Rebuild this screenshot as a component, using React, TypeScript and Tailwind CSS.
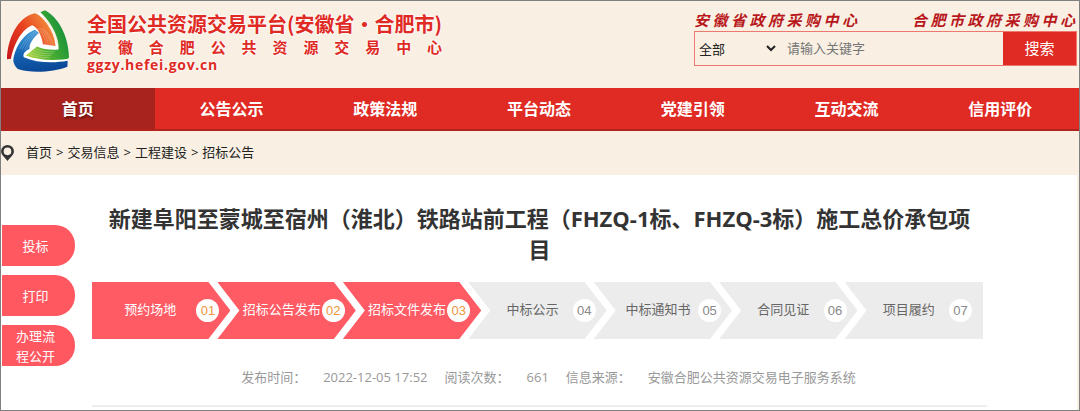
import { useState } from 'react'
import clsx from 'clsx'

interface Step {
  name: string
  no: string
  done: boolean
}

const navItems = ['首页', '公告公示', '政策法规', '平台动态', '党建引领', '互动交流', '信用评价']

const crumbs = ['首页', '交易信息', '工程建设', '招标公告']

const sideButtons = ['投标', '打印', '办理流程公开']

const steps: Step[] = [
  { name: '预约场地', no: '01', done: true },
  { name: '招标公告发布', no: '02', done: true },
  { name: '招标文件发布', no: '03', done: true },
  { name: '中标公示', no: '04', done: false },
  { name: '中标通知书', no: '05', done: false },
  { name: '合同见证', no: '06', done: false },
  { name: '项目履约', no: '07', done: false },
]

const Logo = () => (
  <svg viewBox="18 28 194 192" className="h-16 w-16 shrink-0" aria-hidden="true">
    <defs>
      <linearGradient id="red" x1="0" y1="1" x2="1" y2="0.4">
        <stop offset="0" stopColor="#c4161c" />
        <stop offset="0.55" stopColor="#e8401f" />
        <stop offset="1" stopColor="#f28c3c" />
      </linearGradient>
      <linearGradient id="blue" x1="0.3" y1="0" x2="0.5" y2="1">
        <stop offset="0" stopColor="#3f9bd8" />
        <stop offset="0.5" stopColor="#1464b4" />
        <stop offset="1" stopColor="#0b4796" />
      </linearGradient>
      <linearGradient id="green" x1="0" y1="0.9" x2="1" y2="0.4">
        <stop offset="0" stopColor="#b4d63c" />
        <stop offset="0.45" stopColor="#4fb031" />
        <stop offset="1" stopColor="#0c8c3c" />
      </linearGradient>
    </defs>
    <path d="M34 180C40 130 70 84 98 74L116 38L124 36L180 150L206 182L204 186L80 190L42 186Z" fill="#fff" />
    <path d="M21 179C22 120 52 52 105 40C128 44 166 96 168 139L130 134C126 106 114 84 98 76C68 86 42 130 33 178Z" fill="url(#red)" />
    <path d="M40 182C46 138 76 100 106 90L118 100C98 116 88 136 89 148C74 154 68 164 72 173C110 190 160 192 205 184L204 202C160 220 90 222 54 209C45 200 40 190 40 182Z" fill="url(#blue)" />
    <path d="M122 37L136 31C178 52 208 112 209 174C208 178 200 180 190 180C150 184 110 180 78 168L112 141C130 150 156 152 177 150C182 120 156 66 122 37Z" fill="url(#green)" />
    <g fill="none" stroke="#fff" strokeWidth="1.2" opacity="0.6">
      <path d="M112 86C130 100 137 118 138 135" />
      <path d="M118 84C136 100 144 118 146 136" />
      <path d="M124 84C142 100 152 120 154 137" />
      <path d="M130 86C148 102 159 122 161 138" />
      <path d="M108 93C88 106 70 126 60 148" />
      <path d="M111 95C92 108 76 130 67 150" />
      <path d="M113 97C96 112 82 132 74 152" />
      <path d="M116 99C100 114 88 134 81 150" />
      <path d="M106 147C124 156 146 158 166 156" />
      <path d="M99 152C118 162 140 164 160 162" />
      <path d="M92 158C112 167 134 170 154 168" />
      <path d="M86 163C106 172 128 175 148 174" />
    </g>
  </svg>
)

const Header = () => {
  const [keyword, setKeyword] = useState('')

  return (
    <header className="flex h-[87px] items-start justify-between pl-[5px] pr-0.5 pt-2">
      <div className="flex gap-[17px]">
        <Logo />
        <div className="font-['Noto_Sans_CJK_SC',sans-serif] font-bold text-[#e02a24] [text-shadow:0_0_2px_#fff,0_0_2px_#fff,0_0_3px_#fff]">
          <p className="mt-0.5 text-[20px] leading-[26px]">全国公共资源交易平台(安徽省·合肥市)</p>
          <p className="text-[15px] leading-5 [text-align-last:justify]">安徽合肥公共资源交易中心</p>
          <p className="font-['Open_Sans'] text-[14px] leading-4 tracking-wider">ggzy.hefei.gov.cn</p>
        </div>
      </div>

      <div className="w-[383px]">
        <div className="flex justify-between pr-0.5 text-[15px] font-bold italic leading-[22px] text-[#b8181c]">
          <a href="#anhui" className="w-[163px] [text-align-last:justify]">安徽省政府采购中心</a>
          <a href="#hefei" className="w-[163px] [text-align-last:justify]">合肥市政府采购中心</a>
        </div>
        <form className="flex h-[35px] border border-[#ee7770]" onSubmit={(e) => e.preventDefault()}>
          <select aria-label="范围" className="w-[84px] text-[13px] text-[#222]">
            <option>全部</option>
          </select>
          <input
            aria-label="关键字"
            value={keyword}
            onChange={(e) => setKeyword(e.target.value)}
            placeholder="请输入关键字"
            className="min-w-0 flex-1 px-2 text-[13px] outline-none placeholder:text-[#757575]"
          />
          <button type="submit" className="w-[73px] bg-[#e02a24] text-[15px] text-white">搜索</button>
        </form>
      </div>
    </header>
  )
}

const StepBar = () => (
  <ol className="mt-[17px] flex pr-1">
    {steps.map((step, index) => {
      const first = index === 0
      const last = index === steps.length - 1
      return (
        <li
          key={step.no}
          className={clsx(
            'relative h-[57px] flex-1 text-center text-[13px] leading-[54px]',
            step.done ? 'bg-[#ff5b65] text-white' : 'bg-[#ececec] text-[#666]',
            !first && '-ml-[13px]',
            first && '[clip-path:polygon(0_0,calc(100%-22px)_0,100%_50%,calc(100%-22px)_100%,0_100%)]',
            last && '[clip-path:polygon(0_0,100%_0,100%_100%,0_100%,22px_50%)]',
            !first && !last && '[clip-path:polygon(0_0,calc(100%-22px)_0,100%_50%,calc(100%-22px)_100%,0_100%,22px_50%)]',
          )}
        >
          <span className={clsx('block', first ? 'pr-[22px]' : 'pr-[10px]')}>{step.name}</span>
          <span
            className={clsx(
              "absolute right-[11px] top-[17px] h-[23px] w-[23px] rounded-full bg-white font-['Liberation_Sans'] leading-[23px]",
              step.done ? 'text-[#f0963c]' : 'text-[#888]',
            )}
          >
            {step.no}
          </span>
        </li>
      )
    })}
  </ol>
)

const App = () => {
  const [active, setActive] = useState('首页')

  return (
    <div className="flex min-h-screen flex-col border border-[#808080] bg-[#f9f0e3] font-['Open_Sans','Noto_Sans_CJK_SC',sans-serif]">
      <Header />

      <nav className="flex h-[43px] border-b-2 border-[#b3231d] bg-[#e02a24] pr-0.5">
        {navItems.map((item) => (
          <button
            key={item}
            type="button"
            onClick={() => setActive(item)}
            className={clsx(
              'flex-1 text-base font-bold text-white',
              active === item && 'bg-[#a8231e] [text-shadow:1px_2px_2px_#6a1410]',
            )}
          >
            {item}
          </button>
        ))}
      </nav>

      <div className="flex h-11 items-center text-[13px] text-[#222]">
        <svg viewBox="0 0 12 15" className="mr-3 h-4 w-[13px]" aria-hidden="true">
          <path fillRule="evenodd" d="M6 0A6 6 0 0 1 12 6C12 9 9 11 6 15C3 11 0 9 0 6A6 6 0 0 1 6 0ZM6 2.300A3.600 3.600 0 1 0 6 9.500A3.600 3.600 0 1 0 6 2.300Z" fill="#333" />
        </svg>
        <div className="flex">
          {crumbs.map((item, index) => (
            <span key={item}>
              {index > 0 && <span className="mx-1">&gt;</span>}
              <a href="#crumb">{item}</a>
            </span>
          ))}
        </div>
      </div>

      <div className="mr-0.5 flex flex-1 bg-white">
        <aside className="ml-px mt-[50px] flex w-[73px] shrink-0 flex-col gap-[9px]">
          {sideButtons.map((item) => (
            <button
              key={item}
              type="button"
              className="h-[41px] rounded-r-[20px] bg-[#ff5860] pl-3 pr-[18px] text-[13px] leading-5 text-white"
            >
              {item}
            </button>
          ))}
        </aside>

        <main className="flex-1 pl-[17px] pr-[90px] pt-7">
          <h1 className="px-2 text-center text-[22px] font-bold leading-[31px] text-[#333]">
            新建阜阳至蒙城至宿州（淮北）铁路站前工程（FHZQ-1标、FHZQ-3标）施工总价承包项目
          </h1>
          <StepBar />
          <div className="flex h-[68px] items-center justify-center gap-[17px] border-b-2 border-[#eee] pl-[18px] pt-3 text-[13px] text-[#999]">
            <span>发布时间：</span>
            <span>2022-12-05 17:52</span>
            <span>阅读次数：</span>
            <span>661</span>
            <span>信息来源：</span>
            <span>安徽合肥公共资源交易电子服务系统</span>
          </div>
        </main>
      </div>
    </div>
  )
}

export default App
